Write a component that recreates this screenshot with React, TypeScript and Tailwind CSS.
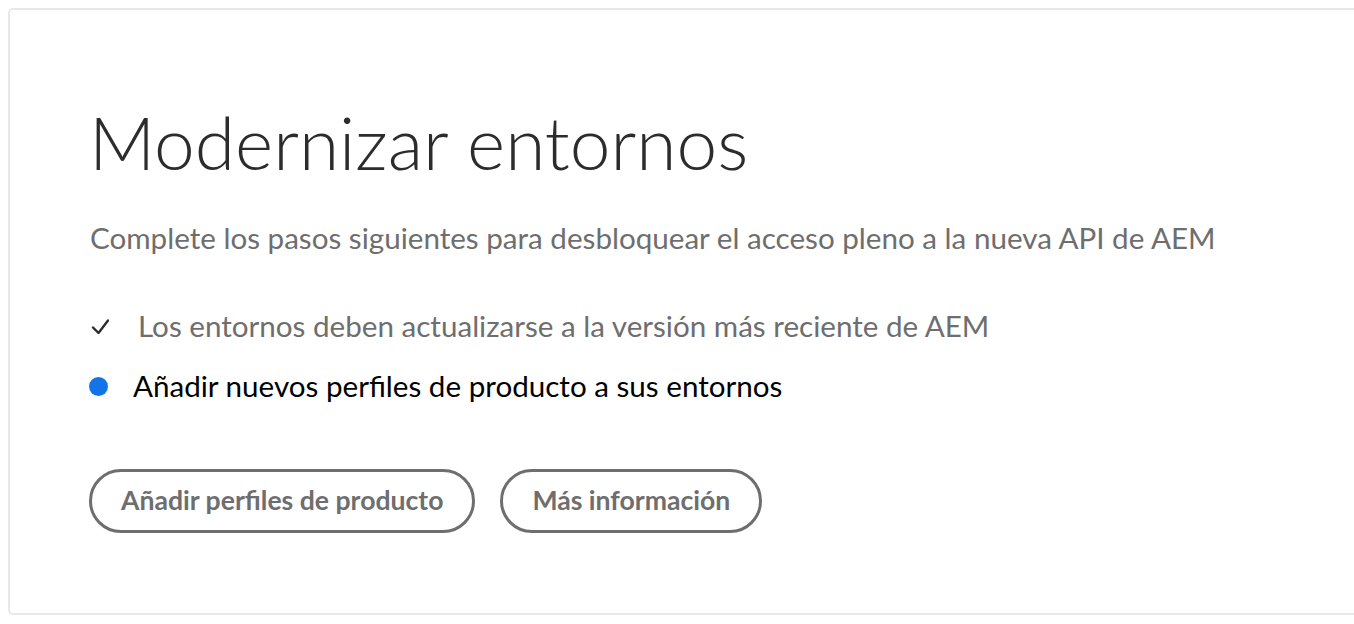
export default function App() {
  return (
    <div className="h-[624px] w-full overflow-hidden bg-white p-2 [font-family:Lato,'Open_Sans',sans-serif]">
      <div className="h-[607px] w-[calc(100%+40px)] rounded-[5px] border-2 border-[#e8e8e8] bg-white pl-[80px] pt-[84px]">
        <h1 className="-ml-[1px] text-[73px] font-light leading-[96px] text-[#2c2c2c]">Modernizar entornos</h1>
        <p className="mt-[30px] text-[29.6px] leading-[36px] text-[#6e6e6e]">
          Complete los pasos siguientes para desbloquear el acceso pleno a la nueva API de AEM
        </p>
        <ul className="mt-[52px] flex flex-col gap-[24px]">
          <li className="flex items-center text-[29.6px] leading-[36px] text-[#6e6e6e]">
            <svg className="ml-[1px] mr-[29px] h-[18px] w-[18px]" viewBox="0 0 18 18" fill="none">
              <path d="M2 10.5l5.5 5.5L17 3.5" stroke="#2c2c2c" strokeWidth="2.4" strokeLinecap="round" strokeLinejoin="round" />
            </svg>
            Los entornos deben actualizarse a la versión más reciente de AEM
          </li>
          <li className="flex items-center text-[29.6px] leading-[36px] text-black">
            <span className="-ml-[1px] mr-[25px] h-[19px] w-[19px] rounded-full bg-[#1473e6]" />
            Añadir nuevos perfiles de producto a sus entornos
          </li>
        </ul>
        <div className="mt-[65px] flex gap-[25px]">
          <button className="-ml-[1px] h-[64px] rounded-full border-[3px] border-[#6e6e6e] px-[29px] text-[26.6px] font-bold text-[#6e6e6e]">
            Añadir perfiles de producto
          </button>
          <button className="h-[64px] rounded-full border-[3px] border-[#6e6e6e] px-[29px] text-[26.6px] font-bold text-[#6e6e6e]">
            Más información
          </button>
        </div>
      </div>
    </div>
  );
}
